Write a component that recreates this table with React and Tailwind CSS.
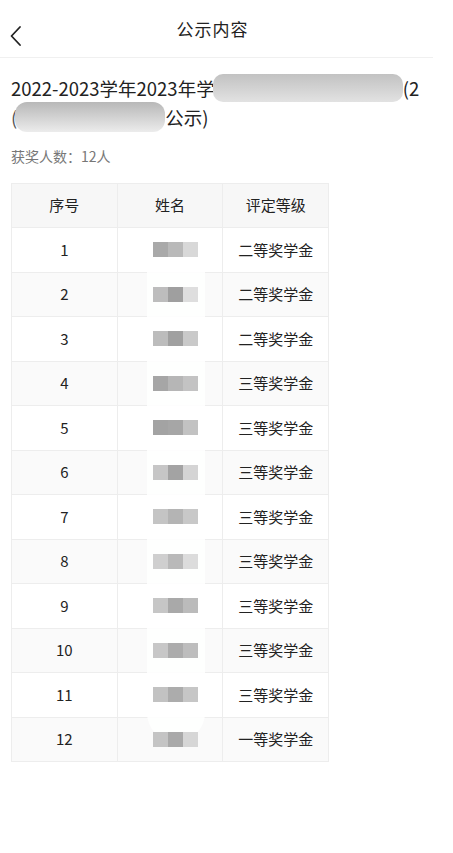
import React from "react";

const rows = [
  ["1", "二等奖学金"],
  ["2", "二等奖学金"],
  ["3", "二等奖学金"],
  ["4", "三等奖学金"],
  ["5", "三等奖学金"],
  ["6", "三等奖学金"],
  ["7", "三等奖学金"],
  ["8", "三等奖学金"],
  ["9", "三等奖学金"],
  ["10", "三等奖学金"],
  ["11", "三等奖学金"],
  ["12", "一等奖学金"],
];

const shadesAll = [
  ["#a9a9a9", "#b9b9b9", "#d8d8d8"],
  ["#bdbdbd", "#9f9f9f", "#dedede"],
  ["#bcbcbc", "#a0a0a0", "#c9c9c9"],
  ["#a6a6a6", "#b6b6b6", "#c3c3c3"],
  ["#a3a3a3", "#a6a6a6", "#c2c2c2"],
  ["#c6c6c6", "#a3a3a3", "#d4d4d4"],
  ["#c4c4c4", "#b4b4b4", "#c8c8c8"],
  ["#cfcfcf", "#b9b9b9", "#dcdcdc"],
  ["#c6c6c6", "#a9a9a9", "#bbbbbb"],
  ["#c7c7c7", "#acacac", "#bdbdbd"],
  ["#c2c2c2", "#acacac", "#c6c6c6"],
  ["#c4c4c4", "#a9a9a9", "#d6d6d6"],
];

function Mosaic({ i }) {
  const shades = shadesAll[i];
  return (
    <div className="relative z-10 flex justify-center pl-[12px]">
      {shades.map((c, k) => (
        <span key={k} className="block h-[15px] w-[15px]" style={{ backgroundColor: c }} />
      ))}
    </div>
  );
}

export default function App() {
  return (
    <div
      className="min-h-[853px] w-[453px] bg-white text-[#222]"
      style={{ fontFamily: '"Noto Sans CJK SC", "Noto Sans", sans-serif' }}
    >
      <div className="relative flex h-[58px] w-[433px] items-center justify-center border-b border-[#f0f0f0] pr-[8px]">
        <svg className="absolute left-[8px] top-[25px]" width="16" height="22" viewBox="0 0 16 22" fill="none">
          <path d="M12 2 L3.5 11 L12 20" stroke="#222" strokeWidth="1.8" strokeLinecap="round" strokeLinejoin="round" />
        </svg>
        <span className="text-[17px] font-normal tracking-[1px] text-[#222]">公示内容</span>
      </div>

      <div className="px-[11px] pt-[16px]">
        <div className="text-[18.5px] leading-[27px] text-[#222]">
          <div className="flex items-center whitespace-nowrap">
            <span>2022-2023学年2023年学</span>
            <span className="mx-[-2px] inline-block h-[28px] w-[190px] rounded-[10px] bg-gradient-to-b from-[#c2c2c2] to-[#e2e2e2]" />
            <span className="pl-[2px]">(2</span>
          </div>
          <div className="flex items-center whitespace-nowrap">
            <span className="text-[#555]">(</span>
            <span className="relative ml-[-2px] inline-block h-[30px] w-[150px] rounded-[12px] bg-gradient-to-b from-[#b8b8b8] to-[#ececec]" />
            <span>公示)</span>
          </div>
        </div>
        <div className="mt-[14px] text-[14px] leading-[20px] text-[#777]">获奖人数：12人</div>
      </div>

      <div className="relative ml-[11px] mt-[17px] w-[318px]">
        <table className="w-[318px] table-fixed border-collapse text-center text-[15px] text-[#222]">
          <thead>
            <tr className="h-[44px] bg-[#f7f7f7]">
              <th className="border-[1.5px] border-[#ededed] font-normal">序号</th>
              <th className="border-[1.5px] border-[#ededed] font-normal">姓名</th>
              <th className="border-[1.5px] border-[#ededed] font-normal">评定等级</th>
            </tr>
          </thead>
          <tbody>
            {rows.map((r, i) => (
              <tr key={r[0]} className={i % 2 === 0 ? "h-[44.5px] bg-white" : "h-[44.5px] bg-[#fafafa]"}>
                <td className="border-[1.5px] border-[#ededed]">{r[0]}</td>
                <td className="border-[1.5px] border-[#ededed]">
                  <Mosaic i={i} />
                </td>
                <td className="border-[1.5px] border-[#ededed]">{r[1]}</td>
              </tr>
            ))}
          </tbody>
        </table>
        <div className="pointer-events-none absolute left-[136px] top-[58px] h-[500px] w-[58px] rounded-[28px] bg-white/90" />
      </div>
    </div>
  );
}
